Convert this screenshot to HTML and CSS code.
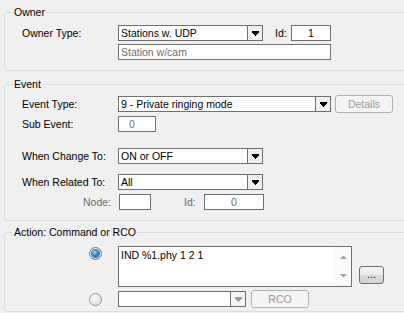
FILE: index.html
```html
<!DOCTYPE html>
<html>
<head>
<meta charset="utf-8">
<link rel="stylesheet" href="styles.css">
</head>
<body>
<div class="page">
  <div class="group g-owner">
    <span class="legend">Owner</span>
    <div class="row">
      <span class="lbl">Owner Type:</span>
      <div class="combo w145"><span class="val">Stations w. UDP</span><span class="btn"><svg width="7" height="5" viewBox="0 0 7 5"><rect x="0" y="0" width="7" height="2"/><rect x="1" y="2" width="5" height="1"/><rect x="2" y="3" width="3" height="1"/><rect x="3" y="4" width="1" height="1"/></svg></span></div>
      <span class="lbl-id">Id:</span>
      <div class="field w40 center">1</div>
    </div>
    <div class="row mt3">
      <span class="lbl"></span>
      <div class="field w213 dim">Station w/cam</div>
    </div>
  </div>

  <div class="group g-event">
    <span class="legend">Event</span>
    <div class="row h18">
      <span class="lbl">Event Type:</span>
      <div class="combo w213"><span class="val">9 - Private ringing mode</span><span class="btn"><svg width="7" height="5" viewBox="0 0 7 5"><rect x="0" y="0" width="7" height="2"/><rect x="1" y="2" width="5" height="1"/><rect x="2" y="3" width="3" height="1"/><rect x="3" y="4" width="1" height="1"/></svg></span></div>
      <div class="button disabled details">Details</div>
    </div>
    <div class="row mt3">
      <span class="lbl">Sub Event:</span>
      <div class="field w38 dim pad10">0</div>
    </div>
    <div class="row mt16">
      <span class="lbl">When Change To:</span>
      <div class="combo w145"><span class="val">ON or OFF</span><span class="btn"><svg width="7" height="5" viewBox="0 0 7 5"><rect x="0" y="0" width="7" height="2"/><rect x="1" y="2" width="5" height="1"/><rect x="2" y="3" width="3" height="1"/><rect x="3" y="4" width="1" height="1"/></svg></span></div>
    </div>
    <div class="row mt10">
      <span class="lbl">When Related To:</span>
      <div class="combo w145"><span class="val">All</span><span class="btn"><svg width="7" height="5" viewBox="0 0 7 5"><rect x="0" y="0" width="7" height="2"/><rect x="1" y="2" width="5" height="1"/><rect x="2" y="3" width="3" height="1"/><rect x="3" y="4" width="1" height="1"/></svg></span></div>
    </div>
    <div class="row mt4">
      <span class="lbl lbl-right dim">Node:</span>
      <div class="field w32"></div>
      <span class="lbl-id2 dim">Id:</span>
      <div class="field w60 center dim">0</div>
    </div>
  </div>

  <div class="group g-action">
    <span class="legend">Action: Command or RCO</span>
    <div class="row top">
      <span class="radio-cell r1"><span class="radio on"><span class="dot"></span></span></span>
      <div class="textarea">
        <div class="ta-text">IND %1.phy 1 2 1</div>
        <div class="scroll">
          <svg width="7" height="4" viewBox="0 0 7 4" class="up"><polygon points="0,4 7,4 3.5,0.5" fill="#a2a2a2"/></svg>
          <svg width="7" height="4" viewBox="0 0 7 4" class="down"><polygon points="0,0 7,0 3.5,3.5" fill="#a2a2a2"/></svg>
        </div>
      </div>
      <div class="button dots">...</div>
    </div>
    <div class="row h18 mt3">
      <span class="radio-cell"><span class="radio"></span></span>
      <div class="combo w128 dis"><span class="val"></span><span class="btn"><svg width="7" height="5" viewBox="0 0 7 5"><rect x="0" y="0" width="7" height="2"/><rect x="1" y="2" width="5" height="1"/><rect x="2" y="3" width="3" height="1"/><rect x="3" y="4" width="1" height="1"/></svg></span></div>
      <div class="button disabled rco">RCO</div>
    </div>
  </div>
</div>
</body>
</html>
```

FILE: styles.css
```css
html, body {
  margin: 0;
  padding: 0;
  background: #f0f0f0;
}
body {
  width: 404px;
  height: 313px;
  overflow: hidden;
  font-family: "Liberation Sans", Arial, sans-serif;
  font-size: 10.5px;
  color: #000;
}
.page {
  display: flex;
  flex-direction: column;
  padding: 0 0 0 4px;
}
.group {
  position: relative;
  border: 1px solid #d5dfe5;
  border-radius: 3px;
  margin-right: -12px;
  padding-left: 17px;
  display: flex;
  flex-direction: column;
}
.g-owner { margin-top: 12px; padding-top: 12px; padding-bottom: 10px; }
.g-event { margin-top: 13px; padding-top: 10px; padding-bottom: 10px; }
.g-action { margin-top: 11px; padding-top: 13px; padding-bottom: 3px; }

.legend {
  position: absolute;
  top: -7px;
  left: 8px;
  padding: 0 1px;
  line-height: 13px;
  background: #f0f0f0;
}
.row {
  display: flex;
  align-items: center;
  height: 16px;
}
.row.h18 { height: 18px; }
.row.top { align-items: flex-start; height: auto; }
.mt3 { margin-top: 3px; }
.mt4 { margin-top: 4px; }
.mt10 { margin-top: 10px; }
.mt16 { margin-top: 16px; }

.lbl {
  width: 96px;
  flex: none;
  line-height: 16px;
  white-space: nowrap;
}
.lbl-right {
  width: 97px;
  text-align: right;
  padding-right: 8px;
  box-sizing: border-box;
}
.lbl-id { width: 16px; margin-left: 12px; flex: none; }
.lbl-id2 { width: 20px; margin-left: 33px; flex: none; }
.dim { color: #6d6d6d; }

.field, .combo {
  box-sizing: border-box;
  height: 16px;
  border: 1px solid #707070;
  background: #fff;
  line-height: 14px;
  flex: none;
  white-space: nowrap;
  overflow: hidden;
}
.field { padding: 0 2px; }
.center { text-align: center; }
.pad10 { padding-left: 10px; }
.w32 { width: 32px; }
.w38 { width: 38px; }
.w40 { width: 40px; }
.w60 { width: 60px; }
.w128 { width: 128px; }
.w145 { width: 145px; }
.w213 { width: 213px; }

.combo { display: flex; }
.combo .val { flex: 1; padding-left: 2px; overflow: hidden; }
.combo .btn {
  width: 14px;
  flex: none;
  border-left: 1px solid #707070;
  background: #f0f0f0;
  display: flex;
  align-items: center;
  justify-content: center;
}
.combo .btn svg { fill: #000; display: block; }
.combo.dis .btn svg { fill: #9a9a9a; }
.combo.dis .btn { background: #f4f4f4; }

.button {
  box-sizing: border-box;
  height: 18px;
  border: 1px solid #707070;
  border-radius: 3px;
  text-align: center;
  line-height: 16px;
  flex: none;
  background: linear-gradient(#f4f4f4 0%, #ebebeb 50%, #dcdcdc 51%, #d4d4d4 100%);
}
.button.disabled {
  border-color: #adb2b5;
  background: #f4f4f4;
  color: #9a9a9a;
}
.details { width: 58px; margin-left: 4px; }
.rco { width: 58px; margin-left: 5px; }
.dots { width: 25px; margin-left: 7px; margin-top: 20px; line-height: 14px; }

.radio-cell {
  width: 96px;
  flex: none;
  display: flex;
  padding-left: 67px;
  box-sizing: border-box;
}
.radio-cell.r1 { padding-top: 1px; }
.radio {
  box-sizing: border-box;
  width: 13px;
  height: 13px;
  border-radius: 50%;
  border: 1px solid #9a9a9a;
  background: radial-gradient(circle at 40% 35%, #ffffff 0%, #e6e6e6 60%, #d0d0d0 100%);
  display: flex;
  align-items: center;
  justify-content: center;
}
.radio.on { border-color: #7a7a7a; }
.radio .dot {
  width: 7px;
  height: 7px;
  border-radius: 50%;
  background: radial-gradient(circle at 40% 35%, #9fdcff 0%, #2a8fd4 45%, #0b4d8f 100%);
  box-shadow: 0 0 0 1px #3b6e9c;
}

.textarea {
  box-sizing: border-box;
  width: 234px;
  height: 41px;
  border: 1px solid #707070;
  background: #fff;
  display: flex;
  flex: none;
}
.ta-text {
  flex: 1;
  padding: 1px 2px;
  line-height: 14px;
  white-space: nowrap;
}
.scroll {
  width: 16px;
  flex: none;
  background: #fafafa;
  display: flex;
  flex-direction: column;
  align-items: center;
  justify-content: space-between;
  padding: 8px 0 8px;
  box-sizing: border-box;
}
.scroll svg { display: block; }
```
